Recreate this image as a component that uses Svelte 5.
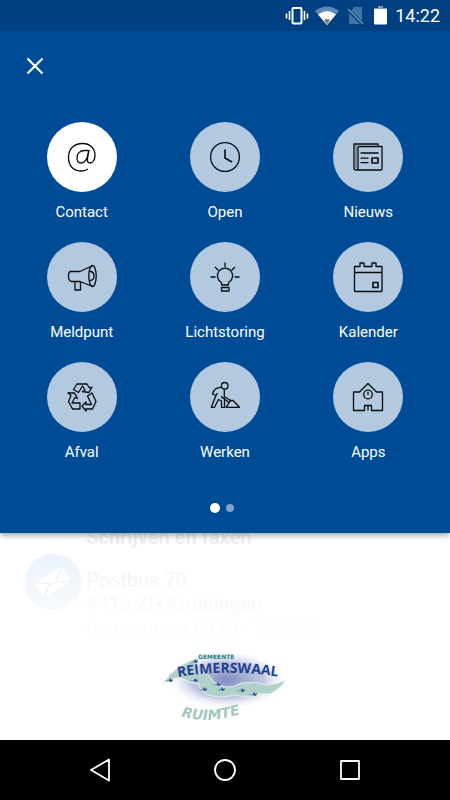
<script>
  const items = [
    { id: 'contact', label: 'Contact' },
    { id: 'open', label: 'Open' },
    { id: 'nieuws', label: 'Nieuws' },
    { id: 'meldpunt', label: 'Meldpunt' },
    { id: 'lichtstoring', label: 'Lichtstoring' },
    { id: 'kalender', label: 'Kalender' },
    { id: 'afval', label: 'Afval' },
    { id: 'werken', label: 'Werken' },
    { id: 'apps', label: 'Apps' }
  ];

  // Town markers on the map in the logo
  const towns = [[46, 21], [21, 40], [46, 40], [55, 49], [69, 44], [73, 49], [93, 50], [105, 54]];

  let selected = $state('contact');
  let page = $state(0);
</script>

<div class="app">
  <div class="top">
    <div class="status">
      <svg width="24" height="20" viewBox="0 0 24 20">
        <rect x="7.5" y="2" width="9" height="15.500" rx="1" fill="none" stroke="#fff" stroke-width="2" />
        <path d="M4.500 5v9M1.500 7.500v5M19.500 5v9M22.500 7.500v5" stroke="#fff" stroke-width="1.600" />
      </svg>
      <svg class="wifi" width="24" height="20" viewBox="0 0 24 20">
        <path d="M0 5Q12-4 24 5L12 19Z" fill="#5d89b5" />
        <path d="M3 8.500Q12 1.500 21 8.500L12 19Z" fill="#fff" />
        <path d="M9 14Q12 12 15 14L12 18.500Z" fill="#777" />
      </svg>
      <svg class="sim" width="17" height="20" viewBox="0 0 17 20">
        <path d="M7 1h7q1 0 1 1v13L4.500 4.500ZM2 7l11 11H3q-1 0-1-1Z" fill="#4274a6" />
        <path d="M1 3l15 15" stroke="#6f91b3" stroke-width="1.400" />
      </svg>
      <svg class="battery" width="13" height="20" viewBox="0 0 13 20">
        <path d="M4 0h5v2h4v2H0V2h4Z" fill="#779bc0" />
        <rect y="3" width="13" height="15.500" rx="1" fill="#fff" />
      </svg>
      <span class="time">14:22</span>
    </div>

    <nav class="menu">
      <button class="close" type="button" aria-label="Sluiten">
        <svg width="18" height="18" viewBox="0 0 18 18">
          <path d="M1.500 1.500l15 15M16.500 1.500l-15 15" stroke="#fff" stroke-width="2.200" />
        </svg>
      </button>

      <div class="grid">
        {#each items as item}
          <button
            class="item"
            class:selected={selected === item.id}
            type="button"
            onclick={() => (selected = item.id)}
          >
            <span class="circle">
              <svg class="icon" width="36" height="36" viewBox="0 0 36 36">
                {#if item.id === 'contact'}
                  <path d="M25 11.500h-4.500c-5 0-7.500 3.500-7.500 7.500 0 3 1.500 5 4 5 3.500 0 6.500-4 7-9.500l1-3-1.500 8c-.4 2.500.2 4.500 2.500 4.500 3 0 5-3.500 5-7.500C31 9 26 4.500 18.500 4.500 10 4.500 4.500 10 4.500 18.500S9.500 32 17.500 32q4 0 6.500-2" />
                {:else if item.id === 'open'}
                  <circle cx="18" cy="18" r="14.400" />
                  <path d="M18 10.500V19l7 4" stroke-width="1.600" stroke-linejoin="miter" />
                {:else if item.id === 'nieuws'}
                  <path d="M8 7.500h24V30q0 1-1 1H6q-2 0-2-2V5h24v2.500M8 7.500V29q0 2-2 2" />
                  <path d="M6 6v23" stroke-width="1" opacity=".6" />
                  <path d="M10.500 14h18M10.500 19.200h8M10.500 23.700h8" />
                  <rect x="22" y="19" width="6" height="5" stroke-width="1.600" />
                {:else if item.id === 'meldpunt'}
                  <path d="M16 12.500H7q-2.500 0-2.500 4.500T7 22.500h9l13 5M16 12.500l13-6M11 22.500V31h5.500v-8" />
                  <ellipse cx="28.500" cy="17" rx="3.700" ry="10.600" />
                  <path d="M26 12.500q4 0 4 4.500t-4 4.500" />
                {:else if item.id === 'lichtstoring'}
                  <path d="M14.500 26v-2.500a7.600 7.600 0 1 1 7 0V26ZM14.500 28.500h7.500V32h-7.500Z" />
                  <path d="M18 3.500V8M8 8l3.500 3.500M28 8l-3.500 3.500M3.500 18h5M27.500 18h5" />
                {:else if item.id === 'kalender'}
                  <path d="M4.500 7.500h5.500V4h4v3.500h8V4h4v3.500h6V32q0 .5-.5.500H5q-.5 0-.5-.5ZM4.500 13.500h28" />
                  <rect x="23" y="23.500" width="5" height="5" stroke-width="1.600" />
                {:else if item.id === 'afval'}
                  <path d="M9.500 10.500L13 5h10l2.500 4 2.500-1-3 5.500-6.500-1 2.500-1.500-2.500-4-4 6.500Z" />
                  <path d="M4 14h6.500l3 5.500-2.500-1L8 24h8v6H8.500L4.500 22.500l2.500-6Z" />
                  <path d="M23.500 17l4.500-3 4 8.500-3.500 7.500H22v2l-4-4.800 4-4.200v2.500h5.500Z" />
                {:else if item.id === 'werken'}
                  <circle cx="17.7" cy="6.800" r="3.300" />
                  <path d="M14.500 8.500Q7.500 8 5.500 15l3.500 1.500 1.500-2.500M9 16.500L7.500 20 4.300 28.300h3.200l4-7.800 3 1.500v6.300h3v-8.800L14 17.500M17.300 10v7.500l7 4.500M14 17.500l8 6" />
                  <path d="M19 28.300l4.500-7 2.500.2 6.500 6.800Z" />
                {:else}
                  <path d="M9.500 13l8.500-8.500 8.500 8.500h6v18.500h-11v-5h-7v5H3.500V13ZM18 26.500v5" />
                  <circle cx="18" cy="15.500" r="4.300" />
                  <path d="M18 13v3" />
                {/if}
              </svg>
            </span>
            <span class="label">{item.label}</span>
          </button>
        {/each}
      </div>

      <div class="dots">
        {#each [0, 1] as n}
          <button
            class="dot"
            class:active={page === n}
            type="button"
            aria-label="Pagina {n + 1}"
            onclick={() => (page = n)}
          ></button>
        {/each}
      </div>
    </nav>
  </div>

  <main class="content">
    <section class="address">
      <svg class="mail" width="58" height="58" viewBox="0 0 58 58">
        <defs>
          <linearGradient id="mail-bg" x1="0" y1="0" x2="0" y2="1">
            <stop offset="0" stop-color="#ecf3fc" />
            <stop offset="1" stop-color="#f8fafd" />
          </linearGradient>
        </defs>
        <circle cx="29" cy="29" r="28.500" fill="url(#mail-bg)" />
        <path d="M11 30l27-17 9 15-27 17Z" fill="#fff" />
        <path d="M11 30l20 1 7-18M25 31l-5 14M32 29l15-1" fill="none" stroke="#e9f0fa" stroke-width="1.200" />
      </svg>
      <div class="lines">
        <h2>Schrijven en faxen</h2>
        <p class="first">Postbus 70</p>
        <p class="second">4416 ZH Kruiningen</p>
        <p class="third">faxnummer 0113 - 395333</p>
      </div>
    </section>

    <svg class="logo" width="150" height="92" viewBox="0 8 150 92" role="img" aria-label="Gemeente Reimerswaal Ruimte">
      <defs>
        <radialGradient id="haze">
          <stop offset="0" stop-color="#7f8cbf" />
          <stop offset="0.6" stop-color="#b1b9d9" stop-opacity="0.8" />
          <stop offset="1" stop-color="#fff" stop-opacity="0" />
        </radialGradient>
        <path id="name-line" d="M28 37Q78 28 138 38" />
        <path id="sub-line" d="M31 76Q62 86 105 69" />
      </defs>
      <ellipse cx="77" cy="40" rx="61" ry="30" fill="url(#haze)" />
      <path
        d="M13 44Q24 25 49 18Q46 26 49 33Q57 32 61 38Q65 45 75 47Q84 48 91 43Q105 41 118 45Q127 44 136 40Q129 50 120 54Q107 53 101 56Q92 57 84 55Q72 59 59 55Q50 52 49 44Q39 43 31 38Q22 37 13 44Z"
        fill="#b1d0ca"
        stroke="#eef7f5"
        stroke-width="0.800"
      />
      {#each towns as [x, y]}
        <path d="M{x - 7} {y + 1}L{x} {y - 1}V{y + 2}Z" fill="#4f9f9c" opacity=".7" />
        <circle cx={x} cy={y} r="1.800" fill="#28458f" />
        <circle cx={x + 0.5} cy={y - 1} r="0.800" fill="#fff" />
      {/each}
      <text class="logo-small" x="48" y="19">GEMEENTE</text>
      <text class="logo-name"><textPath href="#name-line">REIMERSWAAL</textPath></text>
      <text class="logo-sub"><textPath href="#sub-line">RUIMTE</textPath></text>
    </svg>
  </main>

  <footer class="navbar">
    <button type="button" aria-label="Terug">
      <svg width="24" height="24" viewBox="0 0 24 24">
        <path d="M21 1.500v21L3 12Z" />
      </svg>
    </button>
    <button type="button" aria-label="Start">
      <svg width="24" height="24" viewBox="0 0 24 24">
        <circle cx="12" cy="12" r="10" />
      </svg>
    </button>
    <button type="button" aria-label="Overzicht">
      <svg width="24" height="24" viewBox="0 0 24 24">
        <rect x="3" y="3" width="18" height="18" />
      </svg>
    </button>
  </footer>
</div>

<style>
  :global(body) {
    background: #fff;
  }

  .app {
    display: flex;
    flex-direction: column;
    min-height: 100vh;
    font-family: Roboto, sans-serif;
  }

  button {
    margin: 0;
    padding: 0;
    border: none;
    background: none;
    color: inherit;
    font: inherit;
    cursor: pointer;
  }

  svg {
    display: block;
  }

  .top {
    position: relative;
    z-index: 1;
    background: #004b95;
    color: #fff;
    box-shadow: 0 2px 6px rgba(0, 0, 0, 0.4);
  }

  .status {
    display: flex;
    align-items: center;
    justify-content: flex-end;
    height: 31px;
    padding-right: 10px;
    background: #004080;
  }

  .wifi {
    margin-left: 6px;
  }

  .sim {
    margin-left: 8px;
  }

  .battery {
    margin-left: 10px;
  }

  .time {
    margin-left: 8px;
    font-size: 18px;
    line-height: 32px;
  }

  .menu {
    padding: 17px 10px 20px;
  }

  .close {
    display: flex;
    align-items: center;
    justify-content: center;
    width: 36px;
    height: 36px;
    margin-left: 7px;
  }

  .grid {
    display: grid;
    grid-template-columns: repeat(3, 1fr);
    row-gap: 20px;
    margin-top: 38px;
  }

  .item {
    display: flex;
    flex-direction: column;
    align-items: center;
  }

  .circle {
    display: flex;
    align-items: center;
    justify-content: center;
    width: 70px;
    height: 70px;
    border-radius: 50%;
    background: #b3c9df;
  }

  .selected .circle {
    background: #fff;
  }

  .icon {
    fill: none;
    stroke: #080c10;
    stroke-width: 1.3;
    stroke-linejoin: round;
  }

  .label {
    margin-top: 10px;
    font-size: 15px;
    line-height: 20px;
  }

  .dots {
    display: flex;
    align-items: center;
    justify-content: center;
    gap: 6px;
    height: 10px;
    margin-top: 41px;
    padding-right: 6px;
  }

  .dot {
    width: 8px;
    height: 8px;
    border-radius: 50%;
    background: #80a5ca;
  }

  .dot.active {
    width: 10px;
    height: 10px;
    background: #fff;
  }

  .content {
    display: flex;
    flex: 1;
    flex-direction: column;
    align-items: center;
    justify-content: space-between;
    background: #fff;
  }

  .address {
    display: flex;
    align-self: stretch;
    gap: 4px;
    height: 120px;
    margin-top: -8px;
    padding-left: 24px;
  }

  .mail {
    flex: none;
    margin-top: 28px;
  }

  .lines {
    font-size: 20px;
    line-height: 24px;
  }

  h2 {
    margin: 0 0 19px;
    color: #eee;
    font-size: 20px;
    font-weight: 700;
  }

  p {
    margin: 0;
  }

  .first {
    color: #f6f6f6;
  }

  .second {
    color: #fafafa;
  }

  .third {
    color: #fcfcfc;
  }

  .logo {
    overflow: visible;
  }

  .logo-small {
    fill: #237f83;
    font: 700 6px "DejaVu Sans", sans-serif;
  }

  .logo-name {
    fill: #23408f;
    font: 700 14px "Open Sans", sans-serif;
  }

  .logo-sub {
    fill: #a3c8c0;
    font: italic 700 14px "DejaVu Sans", sans-serif;
  }

  .navbar {
    display: grid;
    grid-template-columns: repeat(3, 1fr);
    height: 60px;
    padding: 0 37px;
    background: #000;
  }

  .navbar button {
    display: flex;
    align-items: center;
    justify-content: center;
  }

  .navbar svg {
    fill: none;
    stroke: #fff;
    stroke-width: 1.8;
    stroke-linejoin: round;
  }
</style>
